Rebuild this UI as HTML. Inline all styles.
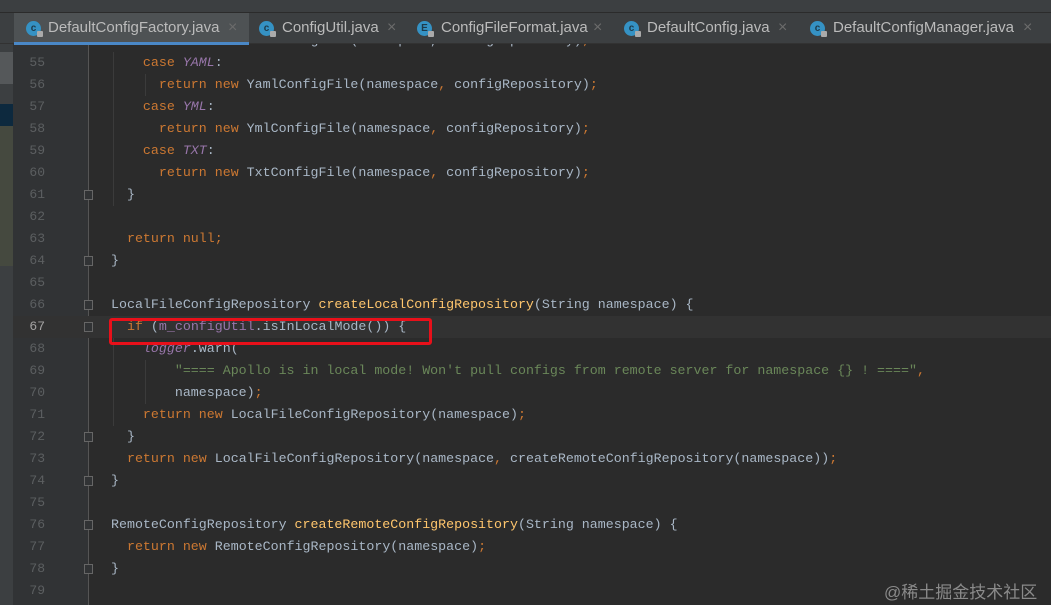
<!DOCTYPE html>
<html><head><meta charset="utf-8"><style>
*{margin:0;padding:0;box-sizing:border-box}
body{width:1051px;height:605px;overflow:hidden;background:#2b2b2b;position:relative;font-family:"Liberation Sans",sans-serif}
.top{position:absolute;left:0;top:0;width:1051px;height:13px;background:#3c3f41;border-bottom:1px solid #2b2b2b}
.tabs{position:absolute;left:0;top:13px;width:1051px;height:31px;background:#3c3f41;border-bottom:1px solid #323232}
.tab{position:absolute;top:0;height:31px;color:#bbbbbb;font-size:15px;line-height:29px}
.tab .ic{position:absolute;top:8px;width:15px;height:15px;border-radius:50%;background:#3592c4;color:#1d3a4a;font-size:10px;line-height:15px;text-align:center;font-weight:bold}
.tab .ic::after{content:"";position:absolute;right:-2px;bottom:-1px;width:6px;height:6px;background:#aaa;border-radius:1px}
.tab .x{position:absolute;top:0;color:#6c6c6c;font-size:16px}
.active{background:#4e5254}
.active::after{content:"";position:absolute;left:0;right:0;bottom:-1px;height:3px;background:#4a88c7}
.left{position:absolute;left:0;top:44px;width:13px;height:561px;background:#3c3f41}
.gut{position:absolute;left:13px;top:44px;width:76px;height:561px;background:#313335}
.foldline{position:absolute;left:88px;top:44px;width:1px;height:561px;background:#555}
.cur{position:absolute;left:13px;top:316px;width:1038px;height:22px;background:#323232}
.ln{position:absolute;left:13px;width:32px;text-align:right;font-family:"Liberation Mono",monospace;font-size:13px;color:#5c5f61;line-height:22px}
.code{position:absolute;left:111px;font-family:"Liberation Mono",monospace;font-size:13.3px;color:#a9b7c6;line-height:22px;white-space:pre}
.k{color:#cc7832}.p{color:#9876aa;font-style:italic}.f{color:#9876aa}.m{color:#ffc66d}.s{color:#6a8759}
.fold{position:absolute;left:84px;width:9px;height:10px;border:1px solid #666;background:#313335}
.red{position:absolute;left:109px;top:318px;width:323px;height:27px;border:3px solid #e8101a;border-radius:3px}
.wm{position:absolute;left:884px;top:578px;color:#8a8a8a;font-size:17px;font-family:"Liberation Sans","Noto Sans CJK SC",sans-serif}
.guide{position:absolute;width:1px;background:#3b3b3b}
</style></head><body>
<div class="top"></div>
<div class="left"><div style="position:absolute;left:0;top:8px;width:13px;height:32px;background:#55585a"></div><div style="position:absolute;left:0;top:60px;width:13px;height:22px;background:#0d293e"></div><div style="position:absolute;left:0;top:82px;width:13px;height:140px;background:#45493f"></div></div>
<div class="gut"></div>
<div class="foldline"></div>
<div class="cur"></div>
<div class="guide" style="left:113px;top:52px;height:154px"></div>
<div class="guide" style="left:145px;top:74px;height:22px"></div>
<div class="guide" style="left:113px;top:338px;height:88px"></div>
<div class="guide" style="left:145px;top:360px;height:44px"></div>

<div class="code" style="top:30px"><span class="k">      return new </span>XmlConfigFile(namespace, configRepository)<span class="k">;</span></div>
<div class="tabs">
 <div class="tab active" style="left:14px;width:235px"><span class="ic" style="left:12px">c</span><span style="position:absolute;left:34px">DefaultConfigFactory.java</span><span class="x" style="left:214px">×</span></div>
 <div class="tab" style="left:258px;width:150px"><span class="ic" style="left:1px">c</span><span style="position:absolute;left:24px">ConfigUtil.java</span><span class="x" style="left:129px">×</span></div>
 <div class="tab" style="left:416px;width:190px"><span class="ic e" style="left:1px">E</span><span style="position:absolute;left:25px;white-space:nowrap">ConfigFileFormat.java</span><span class="x" style="left:177px">×</span></div>
 <div class="tab" style="left:623px;width:175px"><span class="ic" style="left:1px">c</span><span style="position:absolute;left:24px;white-space:nowrap">DefaultConfig.java</span><span class="x" style="left:155px">×</span></div>
 <div class="tab" style="left:808px;width:240px"><span class="ic" style="left:2px">c</span><span style="position:absolute;left:25px;white-space:nowrap">DefaultConfigManager.java</span><span class="x" style="left:215px">×</span></div>
</div>

<div class="ln" style="top:52px">55</div><div class="ln" style="top:74px">56</div><div class="ln" style="top:96px">57</div><div class="ln" style="top:118px">58</div><div class="ln" style="top:140px">59</div><div class="ln" style="top:162px">60</div><div class="ln" style="top:184px">61</div><div class="ln" style="top:206px">62</div><div class="ln" style="top:228px">63</div><div class="ln" style="top:250px">64</div><div class="ln" style="top:272px">65</div><div class="ln" style="top:294px">66</div><div class="ln" style="top:316px;color:#a4a3a3">67</div><div class="ln" style="top:338px">68</div><div class="ln" style="top:360px">69</div><div class="ln" style="top:382px">70</div><div class="ln" style="top:404px">71</div><div class="ln" style="top:426px">72</div><div class="ln" style="top:448px">73</div><div class="ln" style="top:470px">74</div><div class="ln" style="top:492px">75</div><div class="ln" style="top:514px">76</div><div class="ln" style="top:536px">77</div><div class="ln" style="top:558px">78</div><div class="ln" style="top:580px">79</div>

<div class="fold" style="top:190px"></div><div class="fold" style="top:256px"></div><div class="fold" style="top:300px"></div><div class="fold" style="top:322px"></div><div class="fold" style="top:432px"></div><div class="fold" style="top:476px"></div><div class="fold" style="top:520px"></div><div class="fold" style="top:564px"></div>

<div class="code" style="top:52px">    <span class="k">case </span><span class="p">YAML</span>:</div>
<div class="code" style="top:74px">      <span class="k">return new </span>YamlConfigFile(namespace<span class="k">, </span>configRepository)<span class="k">;</span></div>
<div class="code" style="top:96px">    <span class="k">case </span><span class="p">YML</span>:</div>
<div class="code" style="top:118px">      <span class="k">return new </span>YmlConfigFile(namespace<span class="k">, </span>configRepository)<span class="k">;</span></div>
<div class="code" style="top:140px">    <span class="k">case </span><span class="p">TXT</span>:</div>
<div class="code" style="top:162px">      <span class="k">return new </span>TxtConfigFile(namespace<span class="k">, </span>configRepository)<span class="k">;</span></div>
<div class="code" style="top:184px">  }</div>
<div class="code" style="top:228px">  <span class="k">return null;</span></div>
<div class="code" style="top:250px">}</div>
<div class="code" style="top:294px">LocalFileConfigRepository <span class="m">createLocalConfigRepository</span>(String namespace) {</div>
<div class="code" style="top:316px">  <span class="k">if </span>(<span class="f">m_configUtil</span>.isInLocalMode()) {</div>
<div class="code" style="top:338px">    <span class="p">logger</span>.warn(</div>
<div class="code" style="top:360px">        <span class="s">"==== Apollo is in local mode! Won't pull configs from remote server for namespace {} ! ===="</span><span class="k">,</span></div>
<div class="code" style="top:382px">        namespace)<span class="k">;</span></div>
<div class="code" style="top:404px">    <span class="k">return new </span>LocalFileConfigRepository(namespace)<span class="k">;</span></div>
<div class="code" style="top:426px">  }</div>
<div class="code" style="top:448px">  <span class="k">return new </span>LocalFileConfigRepository(namespace<span class="k">, </span>createRemoteConfigRepository(namespace))<span class="k">;</span></div>
<div class="code" style="top:470px">}</div>
<div class="code" style="top:514px">RemoteConfigRepository <span class="m">createRemoteConfigRepository</span>(String namespace) {</div>
<div class="code" style="top:536px">  <span class="k">return new </span>RemoteConfigRepository(namespace)<span class="k">;</span></div>
<div class="code" style="top:558px">}</div>

<div class="red"></div>
<div class="wm">@稀土掘金技术社区</div>
</body></html>
